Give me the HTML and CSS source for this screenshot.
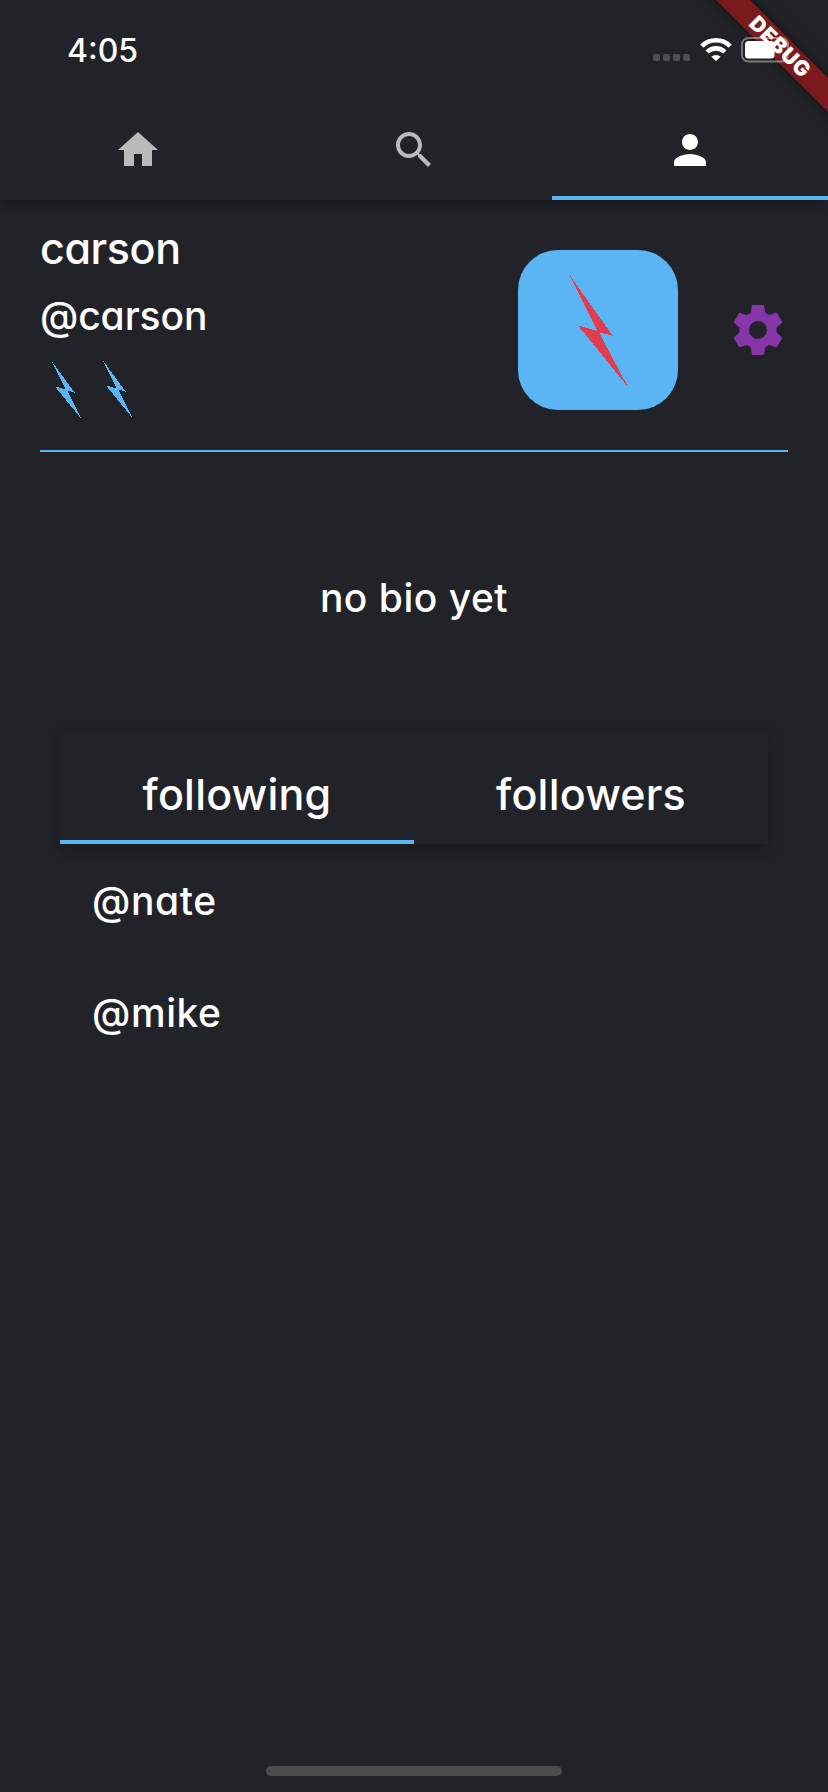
FILE: index.html
```
<!DOCTYPE html>
<html lang="en">
<head>
<meta charset="utf-8">
<title>Profile</title>
<link rel="stylesheet" href="styles.css">
</head>
<body>
<div class="app">
  <header class="appbar">
    <div class="status">
      <span class="clock">4:05</span>
      <div class="indicators">
        <svg class="cell" width="38" height="8" viewBox="0 0 38 8"><rect width="7" height="7" rx="2"/><rect x="10" width="7" height="7" rx="2"/><rect x="20" width="7" height="7" rx="2"/><rect x="30" width="7" height="7" rx="2"/></svg>
        <svg class="wifi" width="32" height="24" viewBox="0 0 32 24"><path d="M1.900 9.100a20 20 0 0 1 28.200 0M7.200 15a12.400 12.400 0 0 1 17.600 0" fill="none" stroke="#fff" stroke-width="4.600"/><path d="M11.300 19.700a7 7 0 0 1 9.400 0L16 24z" fill="#fff"/></svg>
        <svg class="battery" width="52" height="26" viewBox="0 0 52 26"><rect x="1" y="1" width="46" height="23.500" rx="6.500" fill="none" stroke="#fff" stroke-opacity=".4" stroke-width="1.800"/><rect x="4" y="4" width="29.500" height="17.500" rx="3.500" fill="#fff"/><path d="M49.500 9v8q2.500-1.300 2.500-4t-2.500-4z" fill="#fff" fill-opacity=".3"/></svg>
      </div>
    </div>
    <nav class="tabs">
      <a class="tab"><svg width="48" height="48" viewBox="0 0 24 24"><path d="M10 20v-6h4v6h5v-8h3L12 3 2 12h3v8z"/></svg></a>
      <a class="tab"><svg width="48" height="48" viewBox="0 0 24 24"><path d="M15.5 14h-.79l-.28-.27C15.41 12.59 16 11.11 16 9.5 16 5.91 13.09 3 9.5 3S3 5.91 3 9.5 5.91 16 9.5 16c1.61 0 3.09-.59 4.23-1.57l.27.28v.79l5 4.99L20.49 19l-4.99-5zm-6 0C7.01 14 5 11.99 5 9.5S7.01 5 9.5 5 14 7.01 14 9.5 11.99 14 9.5 14z"/></svg></a>
      <a class="tab tab-active"><svg width="48" height="48" viewBox="0 0 24 24"><path d="M12 12c2.21 0 4-1.79 4-4s-1.79-4-4-4-4 1.79-4 4 1.79 4 4 4zm0 2c-2.67 0-8 1.34-8 4v2h16v-2c0-2.66-5.33-4-8-4z"/></svg></a>
    </nav>
  </header>

  <section class="profile">
    <div class="identity">
      <h1 class="name">carson</h1>
      <p class="handle">@carson</p>
      <svg class="bolts" width="110" height="62" viewBox="40 359 110 62" shape-rendering="crispEdges"><g fill="#5bb5f4"><path d="M50.500 360.500 74.500 393.500 67 391.500 81.500 420 55 387.500 65.500 390.500z"/><path d="M101.500 359.500 125.500 392.500 118 390.500 132.500 419 106 386.500 116.500 389.500z"/></g></svg>
    </div>
    <div class="avatar"><svg width="160" height="160" viewBox="518 250 160 160" shape-rendering="crispEdges"><path d="M568.500 273.500 612.500 335.500 599 332.500 628 387 578 325.500 597.500 331z" fill="#e23d4e"/></svg></div>
    <svg class="gear" width="60" height="60" viewBox="-30 -30 60 60"><path fill-rule="evenodd" d="M-5.500-24.500H5.500L6.900-16.800 11.300-14.400 18.500-16.900 23.900-7.700 18-2.600V2.600L23.900 7.700 18.500 16.900 11.300 14.400 6.900 16.800 5.500 24.500H-5.500L-6.900 16.800-11.300 14.400-18.500 16.900-23.900 7.700-18 2.600V-2.600L-23.900-7.700-18.500-16.900-11.300-14.400-6.900-16.800zM0-9.400A9.400 9.400 0 1 0 0 9.400 9.400 9.400 0 1 0 0-9.400z"/></svg>
  </section>

  <p class="bio">no bio yet</p>

  <section class="people">
    <div class="subtabs">
      <a class="subtab subtab-active"><span>following</span></a>
      <a class="subtab"><span>followers</span></a>
    </div>
    <ul class="list">
      <li>@nate</li>
      <li>@mike</li>
    </ul>
  </section>
  <div class="home-bar"></div>
  <div class="debug">DEBUG</div>
</div>
</body>
</html>
```
FILE: styles.css
```
* { box-sizing: border-box; }
body { margin: 0; background: #222328; }
h1, p, ul { margin: 0; padding: 0; font-weight: 500; }
svg { display: block; }
.app {
  position: relative;
  display: flex;
  flex-direction: column;
  width: 828px;
  height: 1792px;
  overflow: hidden;
  background: #222328;
  color: #fff;
  font-family: Inter, "Open Sans", sans-serif;
  font-weight: 500;
  font-feature-settings: "cv11";
  font-size: 39px;
  line-height: 50px;
  white-space: nowrap;
}
.appbar { height: 200px; flex: none; background: #222328; box-shadow: 0 4px 10px rgba(0,0,0,.28); }
.status { position: relative; z-index: 2; display: flex; justify-content: space-between; height: 100px; padding: 0 35px 0 67px; }
.clock { padding-top: 26px; font-size: 32px; font-weight: 550; }
.indicators { display: flex; align-items: flex-start; padding-top: 37px; }
.cell { margin: 17px 9px 0 0; fill: #4e4f53; }
.wifi { margin-right: 9px; }
.tabs { display: grid; grid-template-columns: repeat(3, 1fr); height: 100px; }
.tab { display: flex; justify-content: center; padding-top: 26px; fill: #bababa; }
.tab-active { fill: #fff; border-bottom: 4px solid #5bb5f4; }
.profile { display: flex; height: 252px; margin: 0 40px; border-bottom: 2px solid #5bb5f4; }
.identity { width: 478px; padding-top: 23px; }
.name { font-size: 43px; line-height: 50px; letter-spacing: -.4px; }
.handle { margin-top: 18px; letter-spacing: -.1px; }
.bolts { margin-top: 17px; }
.avatar { width: 160px; height: 160px; margin-top: 50px; border-radius: 40px; background: #5bb5f4; overflow: hidden; }
.gear { margin: 100px 0 0 50px; fill: #8736aa; stroke: #8736aa; stroke-width: 1; stroke-linejoin: round; }
.bio { margin-top: 121px; text-align: center; letter-spacing: .5px; }
.people { margin: 109px 60px 0; }
.subtabs { display: grid; grid-template-columns: 1fr 1fr; height: 112px; box-shadow: 0 5px 10px rgba(0,0,0,.28); }
.subtab { display: flex; justify-content: center; padding-top: 37px; font-size: 43px; letter-spacing: .2px; }
.subtab-active { border-bottom: 4px solid #5bb5f4; }
.list { list-style: none; padding: 32px 0 0 32px; letter-spacing: .6px; }
.list li { height: 112px; }
.home-bar { width: 296px; height: 10px; border-radius: 5px; margin: auto auto 16px; background: #4c4c4c; }
.debug {
  position: absolute;
  left: 670px;
  top: 35px;
  width: 220px;
  height: 24px;
  transform: rotate(45deg);
  background: rgba(154,26,26,.75);
  box-shadow: 0 0 12px rgba(0,0,0,.5);
  text-align: center;
  font-size: 21px;
  line-height: 24px;
  font-weight: 900;
  letter-spacing: .8px;
  z-index: 1;
}
```
